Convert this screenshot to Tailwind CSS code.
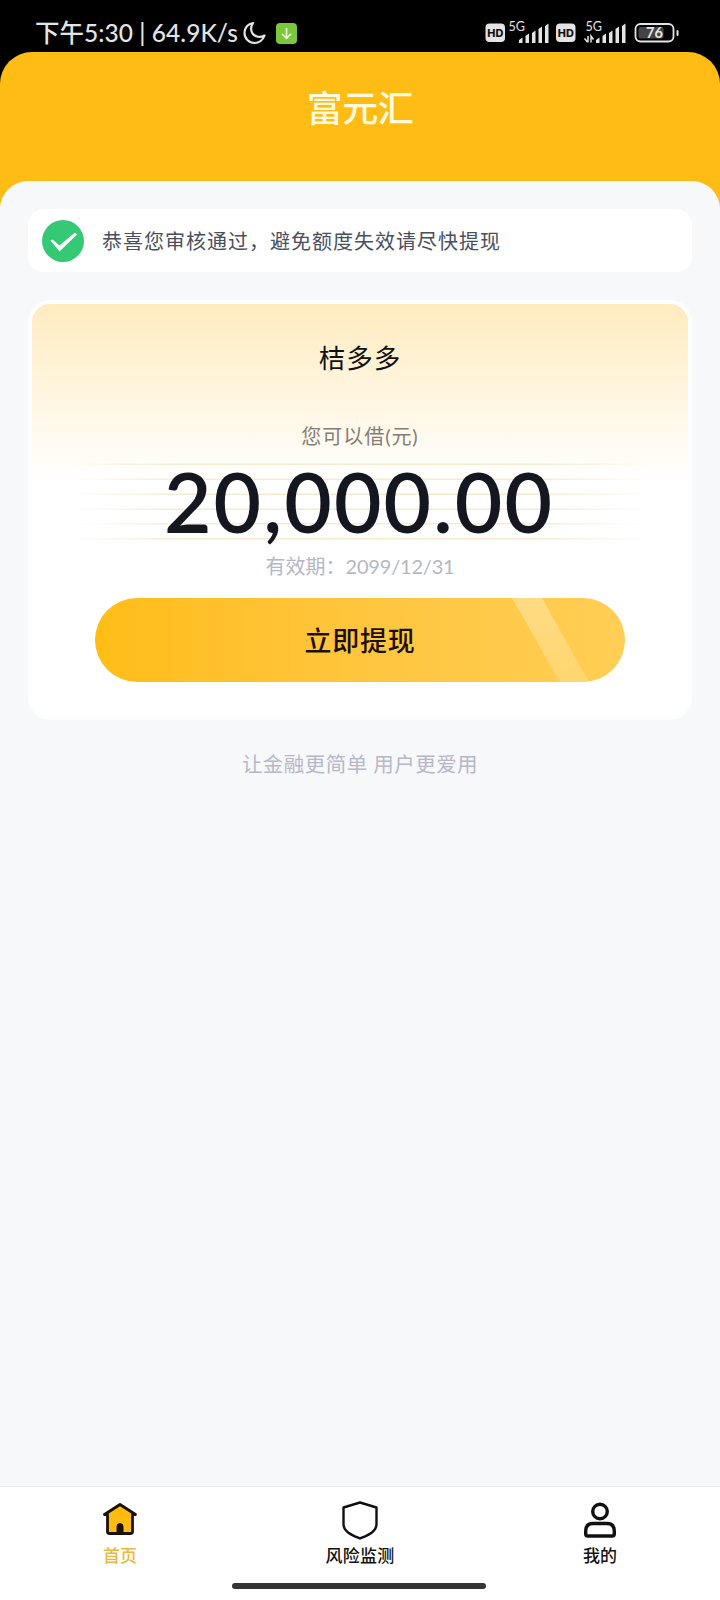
<!DOCTYPE html>
<html lang="zh-CN">
<head>
<meta charset="utf-8">
<title>富元汇</title>
<script src="https://cdn.jsdelivr.net/npm/@tailwindcss/browser@4"></script>
</head>
<body class="bg-black">
<div class="w-[720px] h-[1600px] flex flex-col bg-black overflow-hidden font-['Lato','Noto_Sans_CJK_SC',sans-serif] whitespace-nowrap">
  <header class="h-[52px] shrink-0 flex items-start pt-[15px] pl-[35px] pr-[41px] text-[#e4e4e4]">
    <div class="flex items-center h-[36px]">
      <span class="w-[208px] text-[24.5px] leading-[26px] font-medium tracking-[0.05px]">下午5:30 | 64.9K/s</span>
      <svg class="w-[23px] h-[24px]" viewBox="0 0 23 24" fill="none" stroke="#e4e4e4" stroke-width="2.2" stroke-linejoin="round"><path d="M10 2C5 2.500 1.500 7 1.500 12A10 10 0 0 0 11.500 22C16 22 20 19 21.500 14.500C17 17 12 16 9.500 12.500C7.500 9 8 5 10 2Z"/></svg>
      <svg class="ml-[10px] w-[21px] h-[21px]" viewBox="0 0 21 21"><rect width="21" height="21" rx="4" fill="#7bc63b"/><path d="M10.500 5V15M6 10.800L10.500 15.300L15 10.800" fill="none" stroke="#e7f3d9" stroke-width="1.700"/></svg>
    </div>
    <svg class="ml-auto w-[194px] h-[36px]" viewBox="485 15 194 36" fill="#e4e4e4">
      <rect x="485.500" y="23.500" width="19.500" height="18.500" rx="4"/>
      <text x="487.300" y="36.800" font-family="Inter" font-weight="800" font-size="10.500" textLength="16" lengthAdjust="spacingAndGlyphs" fill="#111">HD</text>
      <text x="508.500" y="31" font-family="Lato" font-size="13" textLength="16.500" lengthAdjust="spacingAndGlyphs">5G</text>
      <path d="M519 43V40L522.500 37.500V43ZM525.500 43V36L529 33.500V43ZM532 43V33L535.500 30.500V43ZM538.500 43V29L542 26.500V43ZM545 43V26L548.500 23.500V43Z"/>
      <rect x="556" y="23.500" width="19.500" height="18.500" rx="4"/>
      <text x="557.800" y="36.800" font-family="Inter" font-weight="800" font-size="10.500" textLength="16" lengthAdjust="spacingAndGlyphs" fill="#111">HD</text>
      <text x="585.500" y="31" font-family="Lato" font-size="13" textLength="16.500" lengthAdjust="spacingAndGlyphs">5G</text>
      <path d="M596 43V40L599.500 37.500V43ZM602.500 43V36L606 33.500V43ZM609 43V33L612.500 30.500V43ZM615.500 43V29L619 26.500V43ZM622 43V26L625.500 23.500V43Z"/>
      <path d="M588 36V42.500M584.500 38.500L587.500 42M591 42.500V36L593.500 39.500" fill="none" stroke="#e4e4e4" stroke-width="1.500"/>
      <rect x="635.500" y="24" width="38" height="17.500" rx="5" fill="none" stroke="#e4e4e4" stroke-width="1.800"/>
      <rect x="638.500" y="27" width="25" height="11.500" rx="2" fill="#444"/>
      <rect x="676.500" y="30" width="2" height="6" rx="1"/>
      <text x="654.500" y="38" text-anchor="middle" font-family="Lato" font-weight="700" font-size="14.500">76</text>
    </svg>
  </header>
  <div class="grow min-h-0 flex flex-col bg-[#ffbc14] rounded-t-[32px]">
    <div class="h-[129px] shrink-0 flex justify-center pt-[30px]">
      <h1 class="text-[36px] leading-[52px] font-medium text-[#fffbe0] tracking-[-0.5px]">富元汇</h1>
    </div>
    <main class="grow flex flex-col bg-[#f6f8fa] rounded-t-[28px] px-7 pt-[28px]">
      <section class="h-[63px] shrink-0 rounded-[16px] bg-white flex items-center pl-[14px]">
        <svg class="w-[42px] h-[42px]" viewBox="0 0 42 42"><circle cx="21" cy="21" r="21" fill="#35c976"/><path d="M8.500 20.500L17.500 31.500L35 14.500L33 12.500L17.500 25.500L10.500 19.500Z" fill="#fff"/></svg>
        <p class="ml-[18px] text-[20px] leading-[30px] tracking-[1px] text-[#4a4e5e] font-['Noto_Sans_CJK_SC',sans-serif]">恭喜您审核通过，避免额度失效请尽快提现</p>
      </section>
      <section class="mt-[28px] h-[420px] shrink-0 rounded-[22px] border-4 border-[#fcfdfe] bg-linear-to-b from-[#ffebbf] to-white to-[176px] flex flex-col items-center">
        <h2 class="mt-[34px] text-[26.500px] leading-[40px] tracking-[1px] text-[#111]">桔多多</h2>
        <p class="mt-[43px] text-[20px] leading-[30px] tracking-[0.950px] text-[#827e74]">您可以借(元)</p>
        <div class="relative mt-[12px] w-[580px] h-[77px] flex justify-center">
          <svg class="absolute inset-0 w-[580px] h-[77px]" viewBox="0 0 580 77">
            <defs><linearGradient id="fade" gradientUnits="userSpaceOnUse" x1="0" x2="580" y1="0" y2="0"><stop offset="0" stop-color="#f3e9cd" stop-opacity="0"/><stop offset=".2" stop-color="#f5ebd0"/><stop offset=".8" stop-color="#f5ebd0"/><stop offset="1" stop-color="#f3e9cd" stop-opacity="0"/></linearGradient></defs>
            <g fill="url(#fade)"><rect y="0.500" width="580" height="1.500"/><rect y="15.500" width="580" height="1.500"/><rect y="30.500" width="580" height="1.500"/><rect y="45.500" width="580" height="1.500"/><rect y="60" width="580" height="1.500"/><rect y="75" width="580" height="1.500"/></g>
          </svg>
          <strong class="relative -left-px text-[82px] leading-[77px] font-semibold tracking-[2.100px] text-[#14171f]">20,000.00</strong>
        </div>
        <p class="mt-[11px] text-[20px] leading-[30px] text-[#b6b7c4]">有效期：<span class="tracking-[-0.200px]">2099/12/31</span></p>
        <button class="relative overflow-hidden mt-[17px] w-[530px] h-[84px] shrink-0 rounded-full bg-linear-to-r from-[#ffbd15] to-[#ffce55] text-[27px] leading-[40px] tracking-[0.700px] font-medium text-[#1a0f02]">
          <svg class="absolute inset-0" width="530" height="84" viewBox="0 0 530 84"><defs><linearGradient id="shine" x2="0" y2="1"><stop stop-color="#ffdb84"/><stop offset="1" stop-color="#ffd66f"/></linearGradient></defs><path d="M417 0H447L494 84H465Z" fill="url(#shine)"/></svg>
          <span class="relative top-px">立即提现</span>
        </button>
      </section>
      <p class="mt-[29px] text-center text-[20.500px] leading-[30px] tracking-[0.450px] text-[#b6b7c8]">让金融更简单 用户更爱用</p>
    </main>
    <nav class="h-[114px] shrink-0 bg-white border-t border-[#e6e8ea] grid grid-cols-3 relative text-[17px] leading-[24px] text-[#111] font-medium">
      <a class="flex flex-col items-center pt-[12px] text-[#e9b93d]">
        <svg class="w-[42px] h-[42px]" viewBox="0 0 42 42" stroke="#1a1209" stroke-linejoin="round" stroke-linecap="round"><path d="M8.500 15.500V32.500Q8.500 34.500 10.500 34.500H31.500Q33.500 34.500 33.500 32.500V15.500L36.500 15.500L21 5.500L5.500 15.500Z" fill="#ffbb10" stroke-width="2.800"/><path d="M18 33V27.500A3 3 0 0 1 24 27.500V33Z" fill="#1a1209" stroke-width="1"/></svg>
        <span class="mt-[3px]">首页</span>
      </a>
      <a class="flex flex-col items-center pt-[12px]">
        <svg class="w-[42px] h-[42px]" viewBox="0 0 42 42" fill="none" stroke="#111" stroke-width="2.400" stroke-linejoin="round"><path d="M21 3.500L37.500 8.500V25C37.500 33 29 36 21 39.500C13 36 4.500 33 4.500 25V8.500Z"/></svg>
        <span class="mt-[3px] tracking-[0.300px]">风险监测</span>
      </a>
      <a class="flex flex-col items-center pt-[12px]">
        <svg class="w-[42px] h-[42px]" viewBox="0 0 42 42" fill="none" stroke="#111" stroke-width="3.400"><circle cx="21" cy="12.500" r="7.300"/><path d="M6.700 32Q6.700 24.500 14.200 24.500H27.800Q35.300 24.500 35.300 32V35Q35.300 37 33.300 37H8.700Q6.700 37 6.700 35Z"/></svg>
        <span class="mt-[3px]">我的</span>
      </a>
      <div class="absolute left-[232px] top-[96px] w-[254px] h-[6px] rounded-full bg-[#353535]"></div>
    </nav>
  </div>
</div>
</body>
</html>
